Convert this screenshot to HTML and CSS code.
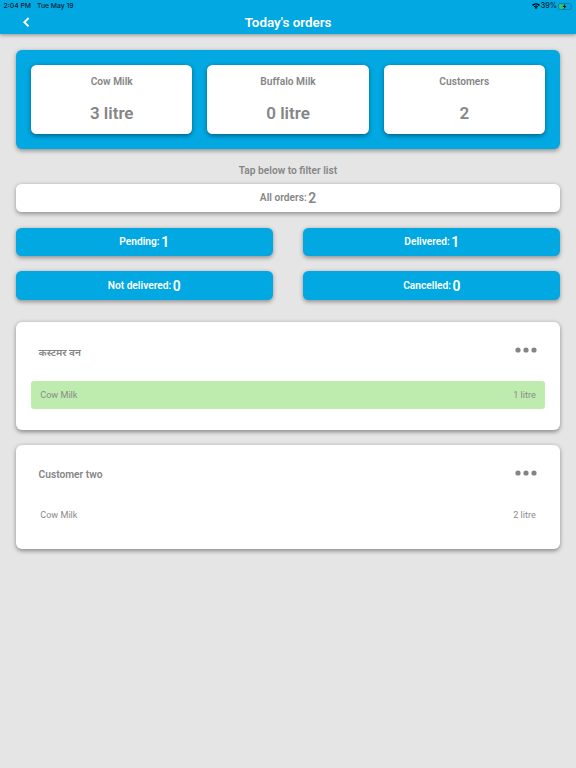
FILE: index.html
```html
<!DOCTYPE html>
<html lang="en">
<head>
<meta charset="utf-8">
<title>Today's orders</title>
<link rel="stylesheet" href="styles.css">
</head>
<body>
<header class="header">
  <div class="status">
    <span class="time">2:04 PM</span><span>Tue May 19</span>
    <svg class="wifi" width="8" height="6" viewBox="0 0 16 12"><path d="M8 12 5.600 9.300a3.400 3.400 0 0 1 4.800 0zM3.800 7.200a6 6 0 0 1 8.400 0l-1.200 1.300a4.300 4.300 0 0 0-6 0zM0 3.700a11.300 11.300 0 0 1 16 0l-2.200 2.300a8.200 8.200 0 0 0-11.600 0z"/></svg>
    <span class="charge">39%</span>
    <svg class="battery" width="15" height="7" viewBox="0 0 15 7"><rect x=".4" y=".4" width="12.700" height="6.200" rx="1.800" fill="none" stroke="#0679a7" stroke-width=".8"/><rect x="1.200" y="1.200" width="4.800" height="4.600" rx=".8" fill="#35c768"/><path d="M7.300.7 4.400 3.900h1.900L5.500 6.300 8.600 3H6.700z"/><path d="M13.800 2.300q1.100 1.200 0 2.400z" fill="#0679a7"/></svg>
  </div>
  <nav class="nav">
    <svg class="back" width="8" height="11" viewBox="0 0 8 11"><path d="M6.600 1 2.400 5.200 6.600 9.400" fill="none" stroke="#fff" stroke-width="2"/></svg>
    <h1>Today's orders</h1>
  </nav>
</header>
<main>
  <section class="summary">
    <div class="stat"><span>Cow Milk</span><strong>3 litre</strong></div>
    <div class="stat"><span>Buffalo Milk</span><strong>0 litre</strong></div>
    <div class="stat"><span>Customers</span><strong>2</strong></div>
  </section>
  <p class="hint">Tap below to filter list</p>
  <section class="filters">
    <div class="filter all">All orders:<b>2</b></div>
    <div class="filter">Pending:<b>1</b></div>
    <div class="filter">Delivered:<b>1</b></div>
    <div class="filter">Not delivered:<b>0</b></div>
    <div class="filter">Cancelled:<b>0</b></div>
  </section>
  <article class="order first">
    <div class="top"><h2 class="hindi" lang="hi">कस्टमर वन</h2><svg class="dots" width="22" height="6" viewBox="0 0 22 6"><circle cx="3" cy="3" r="2.600"/><circle cx="11" cy="3" r="2.600"/><circle cx="19" cy="3" r="2.600"/></svg></div>
    <div class="item done"><span>Cow Milk</span><span>1 litre</span></div>
  </article>
  <article class="order second">
    <div class="top"><h2>Customer two</h2><svg class="dots" width="22" height="6" viewBox="0 0 22 6"><circle cx="3" cy="3" r="2.600"/><circle cx="11" cy="3" r="2.600"/><circle cx="19" cy="3" r="2.600"/></svg></div>
    <div class="item"><span>Cow Milk</span><span>2 litre</span></div>
  </article>
</main>
</body>
</html>
```
FILE: styles.css
```css
* { box-sizing: border-box; }
body { margin: 0; min-height: 768px; background: #e5e5e5; color: #858585; font-family: Roboto, "Noto Sans", sans-serif; }
h1, h2, p { margin: 0; }
.header { height: 34px; background: #01a8e2; box-shadow: 0 1px 4px rgba(0,0,0,.4); }
.status { display: flex; align-items: center; height: 12px; padding: 0 3.500px; color: #06222e; font: 500 6.800px/12px Inter, sans-serif; }
.time { margin-right: 6px; }
.wifi { margin: 0 1px 0 auto; }
.charge { font-size: 7.200px; }
.battery { margin-left: .5px; }
.nav { display: grid; grid-template-columns: 60px 1fr 60px; align-items: center; height: 21px; color: #fff; }
.back { margin-left: 22px; }
h1 { font-size: 13.400px; line-height: 20px; font-weight: 600; text-align: center; }
main { padding: 15.600px 15.700px 0; }
.summary { display: grid; grid-template-columns: repeat(3, 1fr); gap: 15px; height: 99.400px; padding: 15.400px; background: #01a8e2; border-radius: 6px; box-shadow: 0 1.500px 4px rgba(0,0,0,.36); }
.stat { display: flex; flex-direction: column; align-items: center; padding-top: 9px; background: #fff; border-radius: 5.500px; box-shadow: 0 1.500px 4px rgba(0,0,0,.38); }
.stat span { font-size: 10.200px; line-height: 16px; font-weight: 600; }
.stat strong { margin-top: 11px; font-size: 17px; line-height: 24px; font-weight: 600; }
.hint { margin-top: 14px; height: 20.800px; text-align: center; font-size: 10.200px; line-height: 16px; font-weight: 600; }
.filters { display: grid; grid-template-columns: 1fr 1fr; gap: 15.300px 30.600px; }
.filter { display: flex; align-items: center; justify-content: center; gap: 1.500px; height: 28.500px; background: #01a8e2; color: #fff; border-radius: 5.500px; box-shadow: 0 1.500px 4px rgba(0,0,0,.36); font-size: 10.200px; line-height: 16px; font-weight: 600; }
.filter b { font-size: 13.900px; font-weight: 600; }
.all { grid-column: 1 / -1; background: #fff; color: #858585; }
.order { padding: 0 15.400px; background: #fff; border-radius: 6px; box-shadow: 0 1.500px 4px rgba(0,0,0,.4); }
.first { height: 107.500px; margin-top: 22.500px; }
.second { height: 104px; margin-top: 15.400px; }
.top { display: flex; justify-content: space-between; height: 58.300px; padding: 21.500px 7.500px 0; }
.second .top { height: 55px; }
h2 { font-size: 10.200px; line-height: 16px; font-weight: 600; }
.hindi { font-size: 10px; line-height: 18px; }
.dots { margin-top: 3px; fill: #858585; }
.item { display: flex; align-items: center; justify-content: space-between; height: 28.800px; padding: 0 9.200px; border-radius: 3px; color: #8b8b8b; font-size: 9.100px; line-height: 12px; }
.done { background: #beecae; }
```
